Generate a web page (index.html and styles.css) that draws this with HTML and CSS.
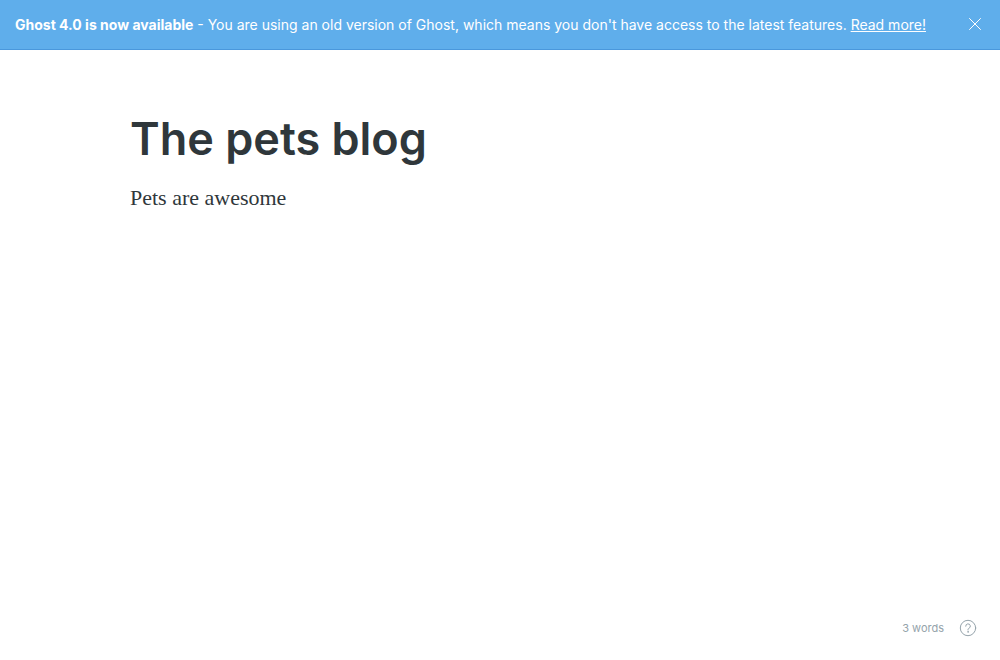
FILE: index.html
```html
<!DOCTYPE html>
<html lang="en">
<head>
<meta charset="utf-8">
<meta name="viewport" content="width=device-width, initial-scale=1">
<title>The pets blog</title>
<link rel="stylesheet" href="styles.css">
</head>
<body>
<div class="app">
  <aside class="alert">
    <p class="alert-text"><strong>Ghost 4.0 is now available</strong> - You are using an old version of Ghost, which means you don't have access to the latest features. <a href="#">Read more!</a></p>
    <button class="alert-close" type="button" aria-label="Close">
      <svg viewBox="0 0 14 14" width="14" height="14" fill="none" stroke="currentColor" stroke-linecap="round"><path d="M1.5 1.5l11 11M12.5 1.5l-11 11"/></svg>
    </button>
  </aside>
  <main class="editor">
    <h1 class="title">The pets blog</h1>
    <p class="body-text">Pets are awesome</p>
  </main>
  <footer class="status">
    <span class="word-count">3 words</span>
    <a class="help" href="#" aria-label="Help">
      <svg viewBox="0 0 18 18" width="18" height="18" fill="none" stroke="currentColor" stroke-linecap="round" stroke-linejoin="round"><circle cx="9" cy="9" r="7.7"/><path d="M6.7 7.2a2.3 2.3 0 1 1 3.2 2.1c-.6.3-.9.7-.9 1.3v.4"/><circle cx="9" cy="12.9" r=".3"/></svg>
    </a>
  </footer>
</div>
</body>
</html>
```
FILE: styles.css
```css
* { box-sizing: border-box; }
body {
  margin: 0;
  background: #fff;
  color: #2f373b;
  font-family: Inter, "Liberation Sans", sans-serif;
}
.app {
  display: flex;
  flex-direction: column;
  min-height: 100vh;
}
.alert {
  display: flex;
  align-items: center;
  justify-content: space-between;
  min-height: 50px;
  padding: 0 16px 2px 15px;
  border-bottom: 1px solid #4a98dc;
  background: #5faeeb;
  color: #fff;
}
.alert-text {
  margin: 0;
  padding-top: 2px;
  font-size: 14px;
  line-height: 20px;
}
.alert-text strong { font-weight: 700; }
.alert-text a { color: inherit; }
.alert-close {
  display: flex;
  padding: 2px;
  border: 0;
  background: none;
  color: inherit;
}
.editor {
  flex: 1;
  width: 100%;
  max-width: 740px;
  margin: 0 auto;
  padding-top: 60px;
}
.title {
  margin: 0 0 14px;
  font-size: 45px;
  line-height: 58px;
  font-weight: 600;
}
.body-text {
  margin: 0;
  font-family: Georgia, "Liberation Serif", serif;
  font-size: 22px;
  line-height: 32px;
}
.status {
  display: flex;
  align-items: center;
  justify-content: flex-end;
  gap: 15px;
  padding: 0 23px 23px;
  color: #95a3ab;
  font-size: 11px;
  line-height: 18px;
}
.help {
  display: flex;
  color: inherit;
}
```
